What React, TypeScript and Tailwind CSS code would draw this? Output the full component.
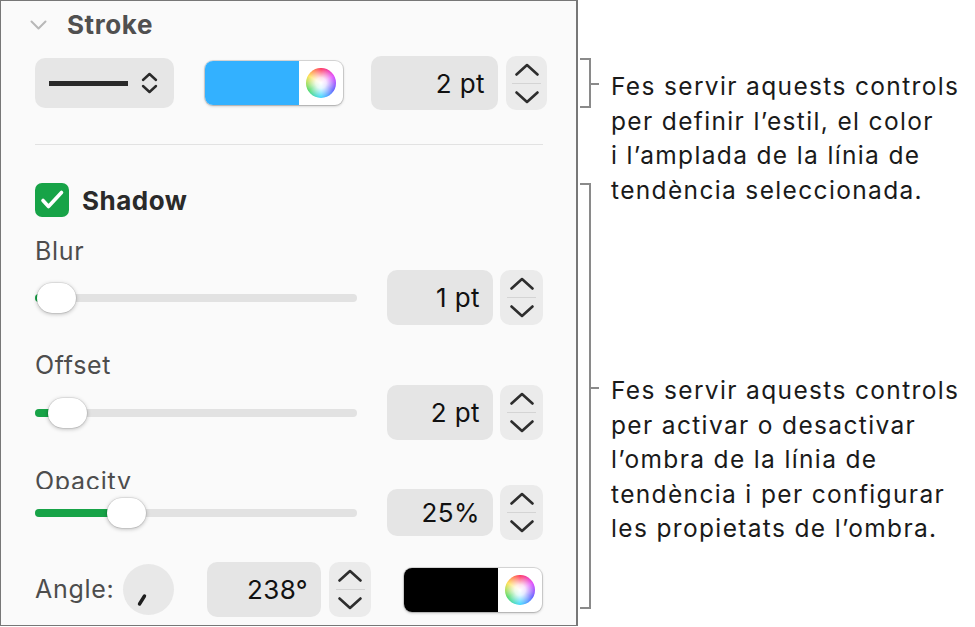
import type { ReactNode } from "react";

function Wheel() {
    return (
        <div className="relative w-[30px] h-[30px] rounded-full bg-[conic-gradient(#ff2d55,#e040fb,#5b5bff,#3ad7ff,#4cd964,#ffe04a,#ff2d55)]">
            <div className="absolute inset-0 rounded-full bg-[radial-gradient(circle,#ffffff_0%,rgba(255,255,255,0.85)_25%,rgba(255,255,255,0)_72%)]" />
        </div>
    );
}

function ColorWell({ swatch }: { swatch: string }) {
    return (
        <div className="shrink-0 flex w-[138px] h-[44px] rounded-[8px] overflow-hidden bg-white shadow-[0_0_0_1px_rgba(0,0,0,0.12),0_1px_3px_rgba(0,0,0,0.25)]">
            <div className={`flex-1 ${swatch}`} />
            <div className="w-[44px] flex items-center justify-center">
                <Wheel />
            </div>
        </div>
    );
}

function Chevron({ up }: { up?: boolean }) {
    return (
        <svg width="26" height="13" viewBox="0 0 26 13" fill="none">
            <path d={up ? "M2.5 11.5 L13 2 L23.5 11.5" : "M2.5 1.5 L13 11 L23.5 1.5"} stroke="#2e2e2e" strokeWidth="2.6" strokeLinecap="round" strokeLinejoin="round" />
        </svg>
    );
}

function Stepper({ className }: { className: string }) {
    return (
        <div className={`shrink-0 rounded-[10px] bg-[#ebebeb] flex flex-col items-center justify-center ${className}`}>
            <Chevron up />
            <div className="w-[29px] h-px bg-[#d4d4d4] my-[7px]" />
            <Chevron />
        </div>
    );
}

function Field({ className, children }: { className: string; children: ReactNode }) {
    return (
        <div className="shrink-0 rounded-[10px] bg-[#e5e5e5] flex items-center justify-end pr-[13px] text-[26px] tracking-[0.4px] text-[#111]">
            <div className={`flex items-center justify-end ${className}`}>{children}</div>
        </div>
    );
}

function Slider({ fill, knob }: { fill: number; knob: number }) {
    return (
        <div className="shrink-0 relative w-[322px] h-[8px] rounded-full bg-[#e2e2e2]">
            <div className="absolute left-0 top-0 h-full rounded-full bg-[#17a347]" style={{ width: fill }} />
            <div className="absolute top-[-11px] w-[39px] h-[30px] rounded-full bg-white shadow-[0_0_0_0.5px_rgba(0,0,0,0.12),0_1px_4px_rgba(0,0,0,0.28)]" style={{ left: knob }} />
        </div>
    );
}

export default function App() {
    return (
        <div className="w-[975px] h-[627px] bg-white flex items-start font-[Inter,sans-serif]">
            {/* inspector panel */}
            <div className="w-[578px] h-[626px] shrink-0 border border-[#777] border-r-2 bg-[#fafafa] pl-[34px] pr-[26px] flex flex-col">
                <div className="h-[47px] flex items-center -ml-[5px]">
                    <svg width="17" height="10" viewBox="0 0 17 10" fill="none">
                        <path d="M1.5 1.5 L8.5 8.5 L15.5 1.5" stroke="#b8b8b8" strokeWidth="2" strokeLinecap="round" strokeLinejoin="round" />
                    </svg>
                    <span className="ml-[20px] text-[26px] font-bold tracking-[0.6px] text-[#505050] leading-none">Stroke</span>
                </div>

                <div className="mt-[8px] h-[54px] flex items-center">
                    <div className="shrink-0 w-[139px] h-[50px] rounded-[10px] bg-[#e6e6e6] flex items-center pl-[14px]">
                        <div className="w-[79px] h-[5px] bg-[#2a2a2a]" />
                        <svg className="ml-[13px]" width="17" height="22" viewBox="0 0 17 22" fill="none">
                            <path d="M2 8 L8.5 2 L15 8" stroke="#2a2a2a" strokeWidth="2.4" strokeLinecap="round" strokeLinejoin="round" />
                            <path d="M2 14 L8.5 20 L15 14" stroke="#2a2a2a" strokeWidth="2.4" strokeLinecap="round" strokeLinejoin="round" />
                        </svg>
                    </div>
                    <div className="ml-[31px] shrink-0">
                        <ColorWell swatch="bg-[#33b1ff]" />
                    </div>
                    <div className="ml-[28px] shrink-0 flex items-center gap-[8px]">
                        <Field className="w-[114px] h-[54px]">2 pt</Field>
                        <Stepper className="w-[41px] h-[54px]" />
                    </div>
                </div>

                <div className="mt-[34px] h-px bg-[#e2e2e2] mr-[7px]" />

                <div className="mt-[38px] h-[34px] flex items-center">
                    <div className="w-[34px] h-[34px] rounded-[7px] bg-[#17a347] flex items-center justify-center">
                        <svg width="34" height="34" viewBox="0 0 34 34" fill="none">
                            <path d="M8 17.5 L13.5 23.5 L26.5 9.5" stroke="#fff" strokeWidth="3.6" strokeLinecap="round" strokeLinejoin="round" />
                        </svg>
                    </div>
                    <span className="ml-[13px] text-[26px] font-bold tracking-[0.5px] text-[#2a2a2a]">Shadow</span>
                </div>

                <div className="mt-[17px] h-[34px] text-[25px] tracking-[0.7px] leading-[34px] text-[#4d4d4d]">Blur</div>
                <div className="mt-[2px] h-[55px] flex items-center">
                    <Slider fill={8} knob={2} />
                    <div className="ml-[30px] shrink-0 flex items-center gap-[7px]">
                        <Field className="w-[93px] h-[55px]">1 pt</Field>
                        <Stepper className="w-[43px] h-[55px]" />
                    </div>
                </div>

                <div className="mt-[23px] h-[34px] text-[25px] tracking-[0.7px] leading-[34px] text-[#4d4d4d]">Offset</div>
                <div className="mt-[3px] h-[55px] flex items-center">
                    <Slider fill={20} knob={13} />
                    <div className="ml-[30px] shrink-0 flex items-center gap-[7px]">
                        <Field className="w-[93px] h-[55px]">2 pt</Field>
                        <Stepper className="w-[43px] h-[55px]" />
                    </div>
                </div>

                <div className="mt-[24px] h-[25px] overflow-hidden text-[25px] tracking-[0.7px] leading-[34px] text-[#4d4d4d]">Opacity</div>
                <div className="h-[47px] flex items-center">
                    <Slider fill={90} knob={72} />
                    <div className="ml-[30px] shrink-0 flex items-center gap-[7px]">
                        <Field className="w-[93px] h-[47px]">25%</Field>
                        <Stepper className="w-[43px] h-[55px]" />
                    </div>
                </div>

                <div className="mt-[26px] h-[55px] flex items-center">
                    <span className="w-[88px] shrink-0 text-[25px] tracking-[0.7px] text-[#4d4d4d]">Angle:</span>
                    <div className="shrink-0 w-[51px] h-[51px] rounded-full bg-[#e8e8e8] flex items-center justify-center">
                        <svg width="51" height="51" viewBox="0 0 51 51" fill="none">
                            <path d="M16.5 40 L21.5 32" stroke="#1e1e1e" strokeWidth="3.4" strokeLinecap="round" />
                        </svg>
                    </div>
                    <div className="ml-[33px] shrink-0 flex items-center gap-[8px]">
                        <Field className="w-[101px] h-[55px]">238°</Field>
                        <Stepper className="w-[42px] h-[55px]" />
                    </div>
                    <div className="ml-[33px] shrink-0">
                        <ColorWell swatch="bg-black" />
                    </div>
                </div>
            </div>

            {/* callout brackets */}
            <div className="pl-[2px] flex flex-col">
                <div className="relative mt-[58px] w-[11px] h-[50px] border-y-2 border-r-2 border-[#8a8a8a]">
                    <div className="absolute left-full top-[23px] w-[10px] h-[2px] bg-[#8a8a8a]" />
                </div>
                <div className="relative mt-[75px] w-[11px] h-[426px] border-y-2 border-r-2 border-[#8a8a8a]">
                    <div className="absolute left-full top-[202px] w-[10px] h-[2px] bg-[#8a8a8a]" />
                </div>
            </div>

            {/* callout texts */}
            <div className="ml-[20px] flex flex-col text-[24.5px] tracking-[1.35px] leading-[34.5px] text-[#1a1a1a] whitespace-nowrap">
                <div className="mt-[69px]">
                    <div>Fes servir aquests controls</div>
                    <div>per definir l’estil, el color</div>
                    <div>i l’amplada de la línia de</div>
                    <div>tendència seleccionada.</div>
                </div>
                <div className="mt-[166px]">
                    <div>Fes servir aquests controls</div>
                    <div>per activar o desactivar</div>
                    <div>l’ombra de la línia de</div>
                    <div>tendència i per configurar</div>
                    <div>les propietats de l’ombra.</div>
                </div>
            </div>
        </div>
    );
}
